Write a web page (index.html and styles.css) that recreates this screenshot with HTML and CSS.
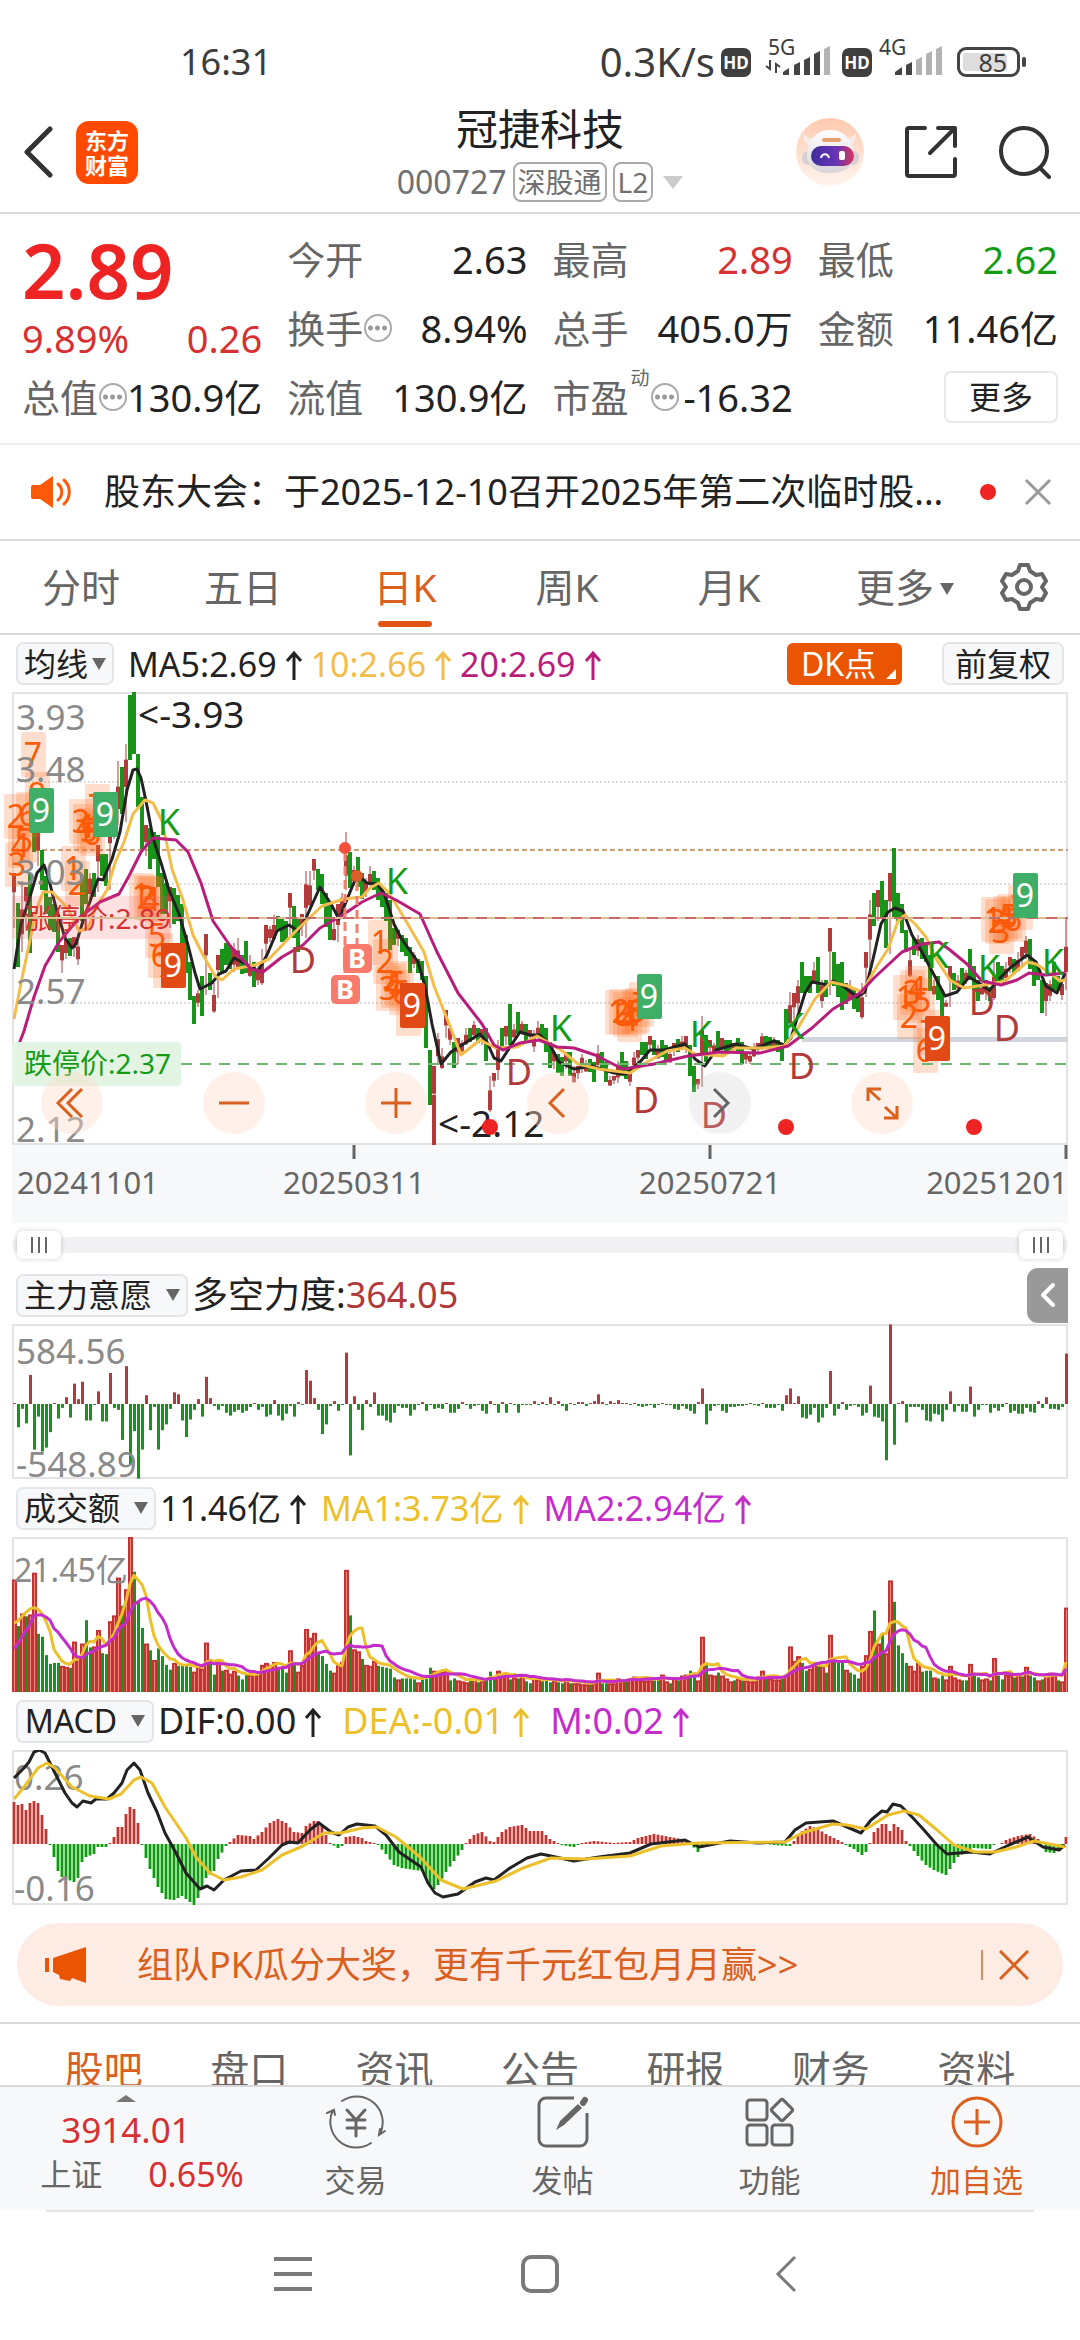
FILE: index.html
```
<!DOCTYPE html>
<html lang="zh-CN">
<head>
    <meta charset="UTF-8">
    <meta name="viewport" content="width=device-width, initial-scale=1.0">
    <title>冠捷科技 000727</title>
    <link rel="stylesheet" href="styles.css">
</head>
<body>
    <div class="statusbar">
        <span class="clock">16:31</span>
        <div class="status-right">
            <span class="speed">0.3K/s</span>
            <span class="hd">HD</span>
            <svg class="signal" width="68" height="38" viewBox="0 0 68 38">
                <text x="1" y="16" class="net">5G</text>
                <path d="M3 21v9l-4-3M9 34v-9l4 3" fill="none" stroke="#444" stroke-width="2"/>
                <path d="M16 36v-3l6-4v7zM27 36v-10l6-3v13zM37 36v-15l6-3v18zM47 36v-21l6-3v24z" fill="#444"/>
                <path d="M57 36V10l6-3v29z" fill="#b3b3b3"/>
            </svg>
            <span class="hd">HD</span>
            <svg class="signal" width="68" height="38" viewBox="0 0 68 38">
                <text x="1" y="16" class="net">4G</text>
                <path d="M17 36v-3l7-5v8zM28 36v-10l6-3v13z" fill="#444"/>
                <path d="M38 36v-15l6-3v18zM48 36v-21l6-3v24zM58 36V10l6-3v29z" fill="#b3b3b3"/>
            </svg>
            <span class="battery"><span>85</span></span>
        </div>
    </div>

    <header class="topbar">
        <div class="top-side">
            <button class="icon-btn" aria-label="返回">
                <svg width="32" height="52" viewBox="0 0 32 52"><path d="M28 3L5 26l23 23" fill="none" stroke="#333" stroke-width="5" stroke-linecap="round" stroke-linejoin="round"/></svg>
            </button>
            <a href="#" class="logo">东方<br>财富</a>
        </div>
        <div class="top-title">
            <h1>冠捷科技</h1>
            <p>000727 <span class="tag">深股通</span> <span class="tag">L2</span><i class="down-big"></i></p>
        </div>
        <div class="top-side top-right">
            <button class="icon-btn" aria-label="助手">
                <svg width="68" height="68" viewBox="0 0 68 68">
                    <defs>
                        <linearGradient id="halo" x1="0" y1="0" x2="0" y2="1"><stop offset="0" stop-color="#ffc9ae"/><stop offset="1" stop-color="#fff5f0"/></linearGradient>
                        <linearGradient id="visor" x1="0" y1="0" x2="1" y2="0"><stop offset="0" stop-color="#3d2e9c"/><stop offset=".6" stop-color="#6a35b5"/><stop offset="1" stop-color="#d9365c"/></linearGradient>
                        <linearGradient id="shell" x1="0" y1="0" x2="0" y2="1"><stop offset="0" stop-color="#ffffff"/><stop offset="1" stop-color="#d9d4d8"/></linearGradient>
                    </defs>
                    <circle cx="34" cy="34" r="34" fill="url(#halo)"/>
                    <path d="M7 15c0 7 2 11 8 13l8-7c-6 1-12-1-16-6zM60 15c0 7-2 11-8 13l-8-7c6 1 12-1 16-6z" fill="#f3ece9"/>
                    <rect x="6" y="33" width="12" height="14" rx="6" fill="#d6d0d3"/>
                    <rect x="51" y="33" width="12" height="14" rx="6" fill="#d6d0d3"/>
                    <path d="M34 12c14 0 24 11 24 25 0 12-10 18-24 18S11 49 11 37c0-14 9-25 23-25z" fill="url(#shell)"/>
                    <rect x="15" y="28" width="43" height="20" rx="10" fill="url(#visor)"/>
                    <path d="M25 40c1-5 7-5 8 0" fill="none" stroke="#fff" stroke-width="2"/>
                    <rect x="43" y="33" width="6" height="9" rx="2" fill="#fff"/>
                    <rect x="26" y="20" width="19" height="4" rx="2" fill="#e5a070"/>
                </svg>
            </button>
            <button class="icon-btn" aria-label="分享">
                <svg width="54" height="54" viewBox="0 0 54 54" fill="none" stroke="#333" stroke-width="4" stroke-linecap="round" stroke-linejoin="round">
                    <path d="M21 3H5a2 2 0 0 0-2 2v44a2 2 0 0 0 2 2h44a2 2 0 0 0 2-2V34M34 3h17v18M50 4L26 28"/>
                </svg>
            </button>
            <button class="icon-btn" aria-label="搜索">
                <svg width="54" height="54" viewBox="0 0 54 54" fill="none" stroke="#333" stroke-width="4" stroke-linecap="round">
                    <circle cx="26" cy="26" r="23"/><path d="M42 43l9 9"/>
                </svg>
            </button>
        </div>
    </header>

    <section class="quote">
        <div class="price">
            <strong>2.89</strong>
            <div class="pair red"><span>9.89%</span><span>0.26</span></div>
        </div>
        <div class="pair"><label>今开</label><span>2.63</span></div>
        <div class="pair"><label>最高</label><span class="red">2.89</span></div>
        <div class="pair"><label>最低</label><span class="green">2.62</span></div>
        <div class="pair"><label>换手<i class="dots"></i></label><span>8.94%</span></div>
        <div class="pair"><label>总手</label><span>405.0万</span></div>
        <div class="pair"><label>金额</label><span>11.46亿</span></div>
        <div class="pair"><label>总值<i class="dots"></i></label><span>130.9亿</span></div>
        <div class="pair"><label>流值</label><span>130.9亿</span></div>
        <div class="pair"><label>市盈<sup>动</sup><i class="dots"></i></label><span>-16.32</span></div>
        <div class="more-cell"><button class="more-btn">更多</button></div>
    </section>

    <section class="notice">
        <svg width="42" height="34" viewBox="0 0 42 34">
            <path d="M2 10h7L22 1v32L9 24H2a2 2 0 0 1-2-2V12a2 2 0 0 1 2-2z" fill="#fb5a08"/>
            <path d="M27 9c5 4 5 12 0 16M33 5c7 6 7 18 0 24" fill="none" stroke="#fb5a08" stroke-width="3" stroke-linecap="round"/>
        </svg>
        <a href="#">股东大会：于2025-12-10召开2025年第二次临时股...</a>
        <i class="red-dot"></i>
        <button class="icon-btn" aria-label="关闭">
            <svg width="28" height="28" viewBox="0 0 28 28"><path d="M2 2l24 24M26 2L2 26" stroke="#999" stroke-width="3"/></svg>
        </button>
    </section>

    <nav class="period">
        <a href="#">分时</a>
        <a href="#">五日</a>
        <a href="#" class="on">日K</a>
        <a href="#">周K</a>
        <a href="#">月K</a>
        <a href="#" class="more">更多<i class="down"></i></a>
        <button class="icon-btn" aria-label="设置">
            <svg width="48" height="50" viewBox="0 0 48 50" fill="none" stroke="#666" stroke-width="4" stroke-linejoin="round">
                <path d="M20 3h8l2 6 6 4 6-1 4 7-4 6 4 6-4 7-6-1-6 4-2 6h-8l-2-6-6-4-6 1-4-7 4-6-4-6 4-7 6 1 6-4z"/>
                <circle cx="24" cy="25" r="7"/>
            </svg>
        </button>
    </nav>

    <main>
        <div class="chart-head first">
            <button class="pick small">均线<i class="down"></i></button>
            <div class="ma-values">
                <span>MA5:2.69<svg class="up" viewBox="0 0 18 30"><path d="M9 29V3M2 10l7-8 7 8"/></svg></span>
                <span class="c-yellow">10:2.66<svg class="up" viewBox="0 0 18 30"><path d="M9 29V3M2 10l7-8 7 8"/></svg></span>
                <span class="c-magenta">20:2.69<svg class="up" viewBox="0 0 18 30"><path d="M9 29V3M2 10l7-8 7 8"/></svg></span>
            </div>
            <button class="dk">DK点</button>
            <button class="pick adjust">前复权</button>
        </div>

        <div class="kline">
            <svg id="kline" viewBox="0 0 1056 453"></svg>
            <div class="tools">
                <button aria-label="最左"><svg viewBox="0 0 62 62"><path d="M31 17L17 31l14 14M41 17L27 31l14 14"/></svg></button>
                <button aria-label="缩小"><svg viewBox="0 0 62 62"><path d="M16 31h30"/></svg></button>
                <button aria-label="放大"><svg viewBox="0 0 62 62"><path d="M16 31h30M31 16v30"/></svg></button>
                <button aria-label="左移"><svg viewBox="0 0 62 62"><path d="M37 17L23 31l14 14"/></svg></button>
                <button aria-label="右移" class="off"><svg viewBox="0 0 62 62"><path d="M25 17l14 14-14 14"/></svg></button>
                <button aria-label="全屏"><svg viewBox="0 0 62 62"><path d="M17 29V17h13M18 18l11 10M46 34v12H33M34 35l11 10"/></svg></button>
            </div>
        </div>
        <div class="dates"><span>20241101</span><span>20250311</span><span>20250721</span><span>20251201</span></div>

        <div class="range">
            <input type="range" min="0" max="100" value="0" aria-label="起始日期">
            <input type="range" min="0" max="100" value="100" aria-label="结束日期">
        </div>

        <div class="chart-head">
            <button class="pick">主力意愿<i class="down"></i></button>
            <div class="values large"><span>多空力度:<b class="dark-red">364.05</b></span></div>
            <button class="fold" aria-label="展开"><svg width="16" height="26" viewBox="0 0 16 26"><path d="M13 3L3 13l10 10" fill="none" stroke="#fff" stroke-width="4" stroke-linecap="round" stroke-linejoin="round"/></svg></button>
        </div>
        <svg class="sub" id="force" viewBox="0 0 1056 155"></svg>

        <div class="chart-head">
            <button class="pick">成交额<i class="down"></i></button>
            <div class="values">
                <span>11.46亿<svg class="up" viewBox="0 0 18 30"><path d="M9 29V3M2 10l7-8 7 8"/></svg></span>
                <span class="c-gold">MA1:3.73亿<svg class="up" viewBox="0 0 18 30"><path d="M9 29V3M2 10l7-8 7 8"/></svg></span>
                <span class="c-purple">MA2:2.94亿<svg class="up" viewBox="0 0 18 30"><path d="M9 29V3M2 10l7-8 7 8"/></svg></span>
            </div>
        </div>
        <svg class="sub" id="volume" viewBox="0 0 1056 155"></svg>

        <div class="chart-head">
            <button class="pick macd">MACD<i class="down"></i></button>
            <div class="values large">
                <span>DIF:0.00<svg class="up" viewBox="0 0 18 30"><path d="M9 29V3M2 10l7-8 7 8"/></svg></span>
                <span class="c-gold">DEA:-0.01<svg class="up" viewBox="0 0 18 30"><path d="M9 29V3M2 10l7-8 7 8"/></svg></span>
                <span class="c-purple">M:0.02<svg class="up" viewBox="0 0 18 30"><path d="M9 29V3M2 10l7-8 7 8"/></svg></span>
            </div>
        </div>
        <svg class="sub" id="macd" viewBox="0 0 1056 155"></svg>

        <div class="banner">
            <svg width="42" height="38" viewBox="0 0 42 38" fill="#ea5504"><path d="M0 12h4v14H0zM8 12L41 1v36l-14-5-2 3-10-2-1-4-6-3z"/></svg>
            <a href="#">组队PK瓜分大奖，更有千元红包月月赢&gt;&gt;</a>
            <button class="icon-btn" aria-label="关闭">
                <svg width="30" height="30" viewBox="0 0 30 30"><path d="M1 1l28 28M29 1L1 29" stroke="#d9601f" stroke-width="3"/></svg>
            </button>
        </div>
    </main>

    <nav class="info-tabs">
        <a href="#" class="on">股吧</a>
        <a href="#">盘口</a>
        <a href="#">资讯</a>
        <a href="#">公告</a>
        <a href="#">研报</a>
        <a href="#">财务</a>
        <a href="#">资料</a>
    </nav>

    <footer class="bottom">
        <a href="#" class="index">
            <i class="tri-up"></i>
            <span class="red">3914.01</span>
            <div><small>上证</small><span class="red">0.65%</span></div>
        </a>
        <a href="#">
            <svg width="62" height="54" viewBox="0 0 62 54" fill="none" stroke="#666" stroke-width="2" stroke-linecap="round">
                <path d="M17 6a26 26 0 0 1 38 33M46 48A26 26 0 0 1 8 15M2 18l7-3 1 5M60 36l-6 4 1-6"/>
                <path d="M22 15l9 10 9-10M22 25h18M22 33h18M31 25v16" stroke-width="3"/>
            </svg>
            交易
        </a>
        <a href="#">
            <svg width="54" height="54" viewBox="0 0 54 54" fill="none" stroke="#666">
                <path d="M38 3H10a7 7 0 0 0-7 7v34a7 7 0 0 0 7 7h34a7 7 0 0 0 7-7V18" stroke-width="3"/>
                <path d="M20 35l4-9L42 9l4 4-18 17z" fill="#666" stroke="none"/><path d="M47 8l2-3" stroke-width="6" stroke-linecap="round"/>
            </svg>
            发帖
        </a>
        <a href="#">
            <svg width="54" height="54" viewBox="0 0 54 54" fill="none" stroke="#666" stroke-width="3">
                <rect x="4" y="5" width="20" height="20" rx="3"/><rect x="4" y="30" width="20" height="20" rx="3"/><rect x="29" y="30" width="20" height="20" rx="3"/>
                <rect x="31" y="7" width="16" height="16" rx="2" transform="rotate(45 39 15)"/>
            </svg>
            功能
        </a>
        <a href="#" class="add">
            <svg width="54" height="54" viewBox="0 0 54 54" fill="none" stroke="#d9601f" stroke-width="3"><circle cx="27" cy="27" r="24"/><path d="M14 27h26M27 14v26"/></svg>
            加自选
        </a>
    </footer>

    <div class="sysnav">
        <button class="icon-btn" aria-label="菜单"><svg width="40" height="40" viewBox="0 0 40 40"><path d="M1 5h38M1 20h38M1 35h38" stroke="#7a7a7a" stroke-width="4"/></svg></button>
        <button class="icon-btn" aria-label="主页"><svg width="40" height="40" viewBox="0 0 40 40"><rect x="3" y="3" width="34" height="34" rx="8" fill="none" stroke="#7a7a7a" stroke-width="4"/></svg></button>
        <button class="icon-btn" aria-label="后退"><svg width="40" height="40" viewBox="0 0 40 40"><path d="M28 3L11 20l17 17" fill="none" stroke="#7a7a7a" stroke-width="3"/></svg></button>
    </div>

    <script src="chart.js"></script>
</body>
</html>
```
FILE: styles.css
```
/* CSS Styles */
* {
    box-sizing: border-box;
}

body {
    font-family: "Noto Sans", "Noto Sans CJK SC", sans-serif;
    margin: 0;
    padding: 0;
    background-color: #fff;
    color: #222;
    line-height: 1;
}

h1, p {
    margin: 0;
}

a {
    color: inherit;
    text-decoration: none;
}

button {
    font-family: inherit;
    color: inherit;
    border: none;
    background: none;
    padding: 0;
    line-height: 1;
    cursor: pointer;
}

svg {
    display: block;
}

.icon-btn {
    display: flex;
}

.red { color: #d63031; }
.green { color: #159c15; }
.dark-red { color: #b03a3a; font-weight: 400; }
.c-yellow { color: #f3bd4c; }
.c-magenta { color: #b91d7c; }
.c-gold { color: #ecc02a; }
.c-purple { color: #c42ccb; }

/* Status bar */
.statusbar {
    display: flex;
    justify-content: space-between;
    align-items: center;
    height: 84px;
    padding: 40px 60px 0 180px;
    color: #3c3c3c;
    font-size: 36px;
}

.status-right {
    display: flex;
    align-items: center;
}

.speed {
    font-size: 40px;
}

.hd {
    width: 30px;
    height: 29px;
    margin-left: 6px;
    border-radius: 7px;
    background-color: #3f3f3f;
    color: #fff;
    font-size: 17px;
    font-weight: 700;
    line-height: 29px;
    text-align: center;
}

.signal {
    margin-left: 16px;
    margin-right: 1px;
    margin-bottom: 8px;
    overflow: visible;
}

.hd + .signal ~ .hd + .signal {
    margin-left: 6px;
}

.net {
    font-size: 21px;
    fill: #3c3c3c;
}

.battery {
    position: relative;
    width: 63px;
    height: 30px;
    margin-left: 10px;
    padding: 3px;
    border: 3px solid #444;
    border-radius: 9px;
}

.battery span {
    display: block;
    width: 44px;
    height: 18px;
    border-radius: 3px;
    background-color: #ddd;
    font-size: 25px;
    line-height: 18px;
    text-align: right;
}

.battery::after {
    content: "";
    position: absolute;
    right: -9px;
    top: 7px;
    width: 4px;
    height: 10px;
    border-radius: 2px;
    background-color: #444;
}

/* Header */
.topbar {
    display: flex;
    align-items: center;
    height: 130px;
    padding: 8px 28px 0 22px;
    border-bottom: 2px solid #d9d9d9;
}

.top-side {
    display: flex;
    align-items: center;
    flex: 1;
    gap: 22px;
}

.top-right {
    justify-content: flex-end;
    gap: 40px;
}

.logo {
    width: 62px;
    height: 63px;
    padding-top: 7px;
    border-radius: 13px;
    background-color: #ff4a00;
    color: #fff;
    font-size: 22px;
    font-weight: 700;
    line-height: 25px;
    text-align: center;
}

.top-title {
    padding-top: 8px;
    text-align: center;
}

.top-title h1 {
    padding-left: 6px;
    font-size: 42px;
    font-weight: 400;
    line-height: 52px;
}

.top-title p {
    display: flex;
    align-items: center;
    gap: 6px;
    padding-left: 6px;
    color: #707070;
    font-size: 32px;
    line-height: 54px;
}

.tag {
    height: 40px;
    padding: 0 3px;
    border: 2px solid #aaa;
    border-radius: 8px;
    font-size: 28px;
    line-height: 36px;
}

.down,
.down-big {
    display: inline-block;
    border-left: 7px solid transparent;
    border-right: 7px solid transparent;
    border-top: 12px solid #666;
}

.down-big {
    margin-left: 4px;
    border-left-width: 10px;
    border-right-width: 10px;
    border-top: 13px solid #ccc;
}

/* Quote panel */
.quote {
    display: grid;
    grid-template-columns: repeat(4, 1fr);
    grid-auto-rows: 69px;
    column-gap: 25px;
    padding: 10px 22px 12px;
    border-bottom: 2px solid #eee;
}

.price {
    grid-row: span 2;
    padding-top: 8px;
}

.price strong {
    display: block;
    color: #ee2424;
    font-size: 76px;
    font-weight: 600;
    line-height: 76px;
}

.price .pair {
    height: 60px;
}

.pair {
    display: flex;
    justify-content: space-between;
    align-items: center;
    font-size: 38px;
    white-space: nowrap;
}

.pair label {
    display: flex;
    align-items: center;
    color: #666;
}

.pair sup {
    align-self: flex-start;
    margin: -10px 0 0 2px;
    font-size: 19px;
    line-height: 20px;
}

.dots {
    width: 28px;
    height: 28px;
    margin-left: 1px;
    border: 2px solid #aaa;
    border-radius: 50%;
    background: radial-gradient(circle, #999 2px, transparent 3px) 0 0 / 7px 24px;
    background-origin: content-box;
    background-clip: content-box;
    padding: 0 1px;
}

.more-cell {
    display: flex;
    justify-content: flex-end;
    align-items: center;
}

.more-btn {
    width: 114px;
    height: 52px;
    border: 2px solid #e6e8ea;
    border-radius: 7px;
    font-size: 32px;
}

/* Notice */
.notice {
    display: flex;
    align-items: center;
    height: 96px;
    padding: 0 28px 0 31px;
    border-bottom: 2px solid #d9d9d9;
    font-size: 36px;
}

.notice a {
    flex: 1;
    margin-left: 31px;
    white-space: nowrap;
}

.red-dot {
    width: 16px;
    height: 16px;
    margin-right: 28px;
    border-radius: 50%;
    background-color: #ee2424;
}

/* Period tabs */
.period {
    display: flex;
    align-items: center;
    height: 94px;
    border-bottom: 2px solid #d9d9d9;
    color: #666;
    font-size: 39px;
}

.period a {
    flex: 0 0 15%;
    position: relative;
    line-height: 92px;
    text-align: center;
    white-space: nowrap;
}

.period .more {
    flex: 1;
}

.period button {
    margin-right: 32px;
}

.period .down {
    margin-left: 6px;
    vertical-align: 7px;
}

.on {
    color: #d9601f;
}

.period .on::after {
    content: "";
    position: absolute;
    left: 50%;
    bottom: 6px;
    width: 54px;
    height: 6px;
    margin-left: -27px;
    border-radius: 3px;
    background-color: #e0550f;
}

/* Chart area */
main {
    padding: 0 12px;
}

.chart-head {
    display: flex;
    align-items: center;
    height: 58px;
    padding: 0 4px;
    font-size: 34px;
    white-space: nowrap;
}

.chart-head.first {
    height: 57px;
}

.pick {
    display: flex;
    align-items: center;
    justify-content: center;
    gap: 14px;
    height: 43px;
    padding: 0 6px;
    border: 2px solid #e3e5e8;
    border-radius: 7px;
    background-color: #f7f8fa;
    font-size: 32px;
}

.pick.small {
    gap: 4px;
}

.pick.macd {
    width: 138px;
}

.pick.adjust {
    width: 122px;
}

.values,
.ma-values {
    display: flex;
    flex: 1;
    gap: 14px;
    margin-left: 4px;
}

.values.large {
    gap: 20px;
    font-size: 36px;
}

.ma-values {
    gap: 8px;
    margin-left: 14px;
}

.up {
    display: inline-block;
    width: 18px;
    height: 30px;
    margin-left: 8px;
    fill: none;
    stroke: currentColor;
    stroke-width: 3px;
    vertical-align: -4px;
}

.dk {
    position: relative;
    width: 115px;
    height: 42px;
    margin-right: 40px;
    padding-right: 12px;
    border-radius: 6px;
    background-color: #ea5504;
    color: #fff;
    font-size: 32px;
}

.dk::after {
    content: "";
    position: absolute;
    right: 6px;
    bottom: 6px;
    border-left: 10px solid transparent;
    border-bottom: 10px solid #fff;
}

.fold {
    display: flex;
    align-items: center;
    justify-content: center;
    width: 41px;
    height: 55px;
    margin-right: -4px;
    border-radius: 11px 0 0 11px;
    background-color: #999;
}

.kline {
    position: relative;
}

.kline > svg,
.sub {
    width: 100%;
    height: auto;
}

.kline > svg {
    position: relative;
    overflow: visible;
}

.tools {
    position: absolute;
    left: 29px;
    bottom: 11px;
    display: flex;
    gap: 100px;
}

.tools button {
    width: 62px;
    height: 62px;
    border-radius: 50%;
    background-color: rgba(255, 220, 200, 0.4);
}

.tools path {
    fill: none;
    stroke: #d9601f;
    stroke-width: 3px;
}

.tools .off {
    background-color: rgba(200, 200, 200, 0.25);
}

.tools .off path {
    stroke: #666;
}

.dates {
    display: grid;
    grid-template-columns: 164fr 356fr 356fr 180fr;
    height: 78px;
    background-color: #f7f8fa;
    color: #666;
    font-size: 31px;
    line-height: 74px;
    text-align: center;
}

.dates span:first-child {
    padding-left: 5px;
    text-align: left;
}

.dates span:last-child {
    text-align: right;
}

/* Date range */
.range {
    position: relative;
    height: 43px;
}

.range::before {
    content: "";
    position: absolute;
    left: 0;
    right: 0;
    top: 14px;
    height: 16px;
    border-radius: 8px;
    background-color: #f1f1f4;
}

.range input {
    position: absolute;
    left: 5px;
    top: 8px;
    width: calc(100% - 10px);
    height: 28px;
    margin: 0;
    appearance: none;
    background: none;
    pointer-events: none;
}

.range input::-webkit-slider-thumb {
    appearance: none;
    width: 44px;
    height: 28px;
    border-radius: 6px;
    background: repeating-linear-gradient(90deg, #666 0 2px, transparent 2px 7px) center / 16px 16px no-repeat #fff;
    box-shadow: 0 0 5px rgba(0, 0, 0, 0.2);
    pointer-events: auto;
}

/* Text inside the charts */
.axis {
    font-size: 35px;
    fill: #8a8a8a;
}

.axis.dark {
    font-size: 37px;
    fill: #222;
}

.axis.cjk {
    font-size: 32px;
}

.limit {
    font-size: 28px;
}

.mark {
    font-size: 36px;
    text-anchor: middle;
}

.count {
    font-size: 32px;
    fill: #fb5a08;
    text-anchor: middle;
}

.nine {
    font-size: 32px;
    fill: #fff;
    text-anchor: middle;
}

.buy {
    font-size: 27px;
    font-weight: 700;
    fill: #fff;
    text-anchor: middle;
}

.line {
    fill: none;
    stroke-width: 3px;
    stroke-linejoin: round;
}

/* Banner */
.banner {
    display: flex;
    align-items: center;
    height: 83px;
    margin: 18px 5px 16px;
    padding: 0 34px 0 28px;
    border-radius: 42px;
    background-color: #fdece3;
    color: #d9601f;
    font-size: 36px;
}

.banner a {
    flex: 1;
    margin-left: 50px;
    white-space: nowrap;
}

.banner button {
    padding-left: 16px;
    border-left: 2px solid #e08a5b;
}

/* Info tabs */
.info-tabs {
    display: flex;
    height: 63px;
    padding: 0 31px;
    border-top: 2px solid #d9d9d9;
    overflow: hidden;
    color: #666;
    font-size: 39px;
    line-height: 90px;
}

.info-tabs a {
    flex: 1;
    text-align: center;
}

/* Bottom bar */
.bottom {
    display: flex;
    height: 125px;
    border-top: 2px solid #d9d9d9;
    background-color: #f7f8fa;
    color: #666;
    font-size: 31px;
}

.bottom a {
    display: flex;
    flex: 1;
    flex-direction: column;
    align-items: center;
    padding-top: 8px;
    gap: 16px;
}

.bottom .index {
    flex: 0 0 252px;
    gap: 10px;
    font-size: 35px;
}

.bottom .index div {
    display: flex;
    align-items: center;
    gap: 46px;
    padding-left: 32px;
    font-size: 34px;
}

.bottom small {
    font-size: 31px;
}

.bottom .add {
    color: #d9601f;
}

.tri-up {
    border-left: 10px solid transparent;
    border-right: 10px solid transparent;
    border-bottom: 7px solid #777;
}

/* System navigation */
.sysnav {
    display: flex;
    justify-content: center;
    gap: 207px;
    margin: 0 46px;
    padding: 42px 0;
    border-top: 2px solid #e6e6e6;
}
```
FILE: chart.js
```
// one bar every 4 units, first bar centred on x = 2
const STEP = 4;
const RED = "#b23a3a";
const GREEN = "#1a931a";

const barX = i => 2 + i * STEP;
const rect = (x, y, w, h, fill, extra = "") =>
    `<rect x="${x}" y="${y}" width="${w}" height="${h}" fill="${fill}" ${extra}/>`;
const text = (x, y, cls, str, fill) =>
    `<text x="${x}" y="${y}" class="${cls}"${fill ? ` fill="${fill}"` : ""}>${str}</text>`;
const line = (pts, color) => `<polyline class="line" stroke="${color}" points="${pts}"/>`;
const frame = h => `<rect x="1" y="1" width="1054" height="${h - 2}" fill="none" stroke="#e3e3e3" stroke-width="2"/>`;
const dash = (y, color, pattern, from = 0) =>
    `<path d="M${from} ${y}H1056" stroke="${color}" stroke-width="2" stroke-dasharray="${pattern}"/>`;

// candles: top,length (negative length = falling day)
const candles = `181,55 211,-64 189,71 195,41 181,-80 139,-21 140,34 158,-40 184,-38 205,-33 212,-28 229,-31
253,28 243,24 246,-18 245,20 250,23 184,-45 177,-35 181,28 181,-24 153,47 162,-22 162,-32 126,72 112,35 69,64 75,-47
52,78 3,-65 0,-62 62,-53 105,-52 133,31 136,-41 140,-27 143,-52 181,-41 191,-31 195,41 196,-36 203,-26 212,-48 243,-38
270,-38 304,-28 298,17 284,-40 242,61 281,-17 291,30 263,43 257,-24 251,-22 253,-24 251,29 246,31 263,-19 249,-32 263,22
270,-25 274,19 257,36 233,34 234,16 223,25 224,-15 226,-24 229,-20 201,42 214,-32 226,-34 222,22 179,67 179,36 167,21
177,-21 182,-30 201,-34 212,-36 229,20 212,38 201,25 140,58 160,-36 174,20 165,-30 181,-26 186,19 174,20 179,-19 186,-22
195,-20 201,-28 208,-50 236,-17 238,16 243,-17 246,-18 255,-26 260,16 267,-14 269,-19 284,-72 358,-55 374,79 341,31 356,21
318,28 332,21 350,-26 346,26 348,15 336,17 336,-14 329,19 336,-15 337,16 336,-33 384,36 381,14 348,40 336,-21 334,19
312,-41 332,14 320,-22 329,14 332,-17 338,12 338,22 329,17 332,-17 336,-24 350,-26 360,17 362,-19 365,-19 360,17 360,-24
374,17 374,13 362,19 368,12 367,-13 370,-20 353,21 360,-17 370,-20 384,10 384,8 369,22 360,-24 369,-18 377,17 360,14
358,14 350,-13 350,-17 344,16 348,-15 353,14 348,-17 353,-17 356,15 351,13 347,-13 344,14 344,17 353,-31 374,-26 387,10
324,71 343,-27 348,14 351,12 339,-21 346,17 348,-12 348,-12 351,10 346,-14 350,-22 362,10 362,10 351,14 351,12 341,17
344,-13 345,-12 345,13 348,-12 353,-16 317,-35 300,33 301,26 288,31 270,-31 284,-16 284,-17 270,21 265,-36 288,28 288,-17
236,67 260,-34 272,-33 270,-48 291,-21 288,21 298,-19 301,-19 291,36 260,45 208,72 201,-33 198,31 189,-36 208,-48 181,81
156,-70 201,-28 212,-29 238,-22 257,28 246,-17 243,21 246,-21 253,-17 263,-36 288,15 284,-24 298,-29 308,7 274,41 281,-17
283,14 276,-19 278,14 257,-31 274,-24 288,-21 291,12 288,20 295,-14 269,39 270,-21 274,-17 270,17 265,16 267,-15 260,20
255,19 244,23 247,-30 270,-24 274,-14 288,-33 291,33 288,21 270,-28 284,-15 288,20 226,72`
    .split(/\s+/).map(c => c.split(",").map(Number));

const ma5 = "2,277 9,232 17,208 25,181 32,173 36,184 43,212 53,246 60,256 64,252 71,229 81,201 86,187 91,188 100,167 108,140 115,98 121,78 125,77 129,86 134,109 141,146 150,174 157,198 167,222 176,253 183,281 188,297 200,291 207,282 214,279 222,266 234,272 246,279 255,263 265,239 277,233 286,239 294,226 308,195 319,212 327,227 336,205 343,188 348,185 355,191 365,192 372,201 382,232 389,246 406,270 413,294 420,332 429,372 439,360 453,351 468,342 475,350 482,366 489,369 498,355 508,340 518,343 528,343 538,353 547,370 562,377 580,374 602,381 614,382 628,370 638,358 652,358 673,352 683,367 693,374 704,358 724,352 741,357 762,349 772,353 779,346 793,301 800,290 816,293 821,289 831,294 845,305 853,300 862,263 869,232 876,220 883,216 891,219 900,243 910,260 921,281 933,304 945,300 957,285 967,291 977,299 986,288 998,276 1015,263 1024,270 1034,294 1045,301 1053,281";
const ma10 = "2,327 9,291 17,253 24,219 31,200 40,200 50,210 57,219 67,239 76,236 84,215 95,198 103,171 112,150 121,122 133,108 141,111 150,129 160,177 171,208 181,243 191,263 203,284 210,288 222,277 243,273 257,267 277,246 294,229 310,214 332,207 350,205 358,196 367,191 377,201 394,229 412,260 422,294 436,329 449,363 468,348 484,356 505,355 525,344 549,358 566,372 587,377 618,381 635,370 655,359 673,356 683,362 711,364 724,356 752,356 772,354 786,336 803,307 819,290 836,294 850,300 865,274 876,257 886,229 893,223 903,232 914,245 924,267 938,288 952,296 972,293 993,289 1015,270 1024,272 1038,281 1048,289 1053,288";
const ma20 = "2,365 12,339 22,305 33,274 47,250 67,226 88,210 107,202 117,184 129,160 141,146 164,148 176,160 189,191 201,229 219,255 239,277 251,280 270,265 291,253 308,236 329,224 350,210 369,201 384,208 408,222 425,260 446,301 470,332 482,353 491,358 508,351 527,348 545,355 562,356 583,363 611,377 642,372 676,364 707,360 748,361 776,354 800,336 821,317 848,301 862,286 890,260 910,252 927,250 938,258 955,272 970,289 989,293 1005,288 1017,281 1034,283 1053,281";

// nine-turn counters: x, y, digit
const counts = [
    [21, 62, 7], [25, 102, 8], [4, 124, 2], [16, 122, 6], [12, 148, 5], [8, 153, 4], [5, 172, 3],
    [61, 176, 1], [65, 191, 2], [69, 129, 3], [73, 134, 4], [77, 138, 5], [80, 141, 6], [85, 114, 7],
    [129, 203, 1], [134, 205, 2], [137, 206, 3], [139, 207, 4], [145, 243, 5], [148, 263, 6], [153, 273, 7],
    [368, 250, 1], [373, 269, 2], [376, 296, 3], [381, 293, 4], [385, 291, 5], [389, 300, 6], [396, 321, 7],
    [605, 320, 1], [609, 319, 2], [613, 322, 3], [617, 327, 4], [622, 320, 5], [625, 318, 6], [629, 312, 7],
    [893, 305, 1], [897, 324, 2], [900, 300, 3], [905, 296, 4], [910, 308, 5], [913, 358, 6], [917, 340, 7],
    [981, 227, 1], [985, 229, 2], [989, 239, 3], [993, 226, 4], [997, 224, 5], [1001, 227, 6], [1008, 215, 7]
];
const nines = [[29, 118, 0], [93, 122, 0], [161, 273, 1], [400, 313, 1], [637, 304, 0], [925, 346, 1], [1013, 203, 0]];
const kMarks = [[157, 130], [385, 189], [549, 336], [689, 342], [781, 334], [926, 263], [977, 276], [1041, 270]];
const dMarks = [[291, 268], [507, 380], [634, 408], [702, 423], [790, 374], [970, 310], [995, 336]];

function drawKline() {
    let s = frame(453);
    s += dash(90, "#ddd", "2 2") + dash(192, "#ddd", "2 2") + dash(311, "#ddd", "2 2");
    s += rect(790, 345, 266, 5, "#d0d5dc");
    s += dash(158, "#cf9d76", "5 3", 30);
    candles.forEach(([top, len], i) => {
        const x = barX(i);
        if (len < 0) {
            s += rect(x - 2, top, 4, -len, GREEN);
        } else {
            s += rect(x - 0.5, top, 1, len, RED);
            s += rect(x - 2, top + len * (i % 3) * 0.2, 4, len * (len > 40 ? 0.35 : 0.55), RED);
        }
    });
    // rebound from the 2.12 low
    s += rect(barX(105) - 2, 403, 4, 50, RED);
    s += line(ma5, "#222") + line(ma10, "#f3bd4c") + line(ma20, "#b91d7c");

    counts.forEach(([x, y]) => s += rect(x - 12, y - 22, 25, 45, "#ff6a1a", 'rx="2" opacity=".22"'));
    counts.forEach(([x, y, n]) => s += text(x, y + 12, "count", n));
    s += text(4, 38, "axis", "3.93") + text(4, 90, "axis", "3.48") + text(4, 193, "axis", "3.03");
    s += text(4, 312, "axis", "2.57") + text(4, 450, "axis", "2.12");

    // price limit lines
    s += rect(0, 204, 160, 43, "#ff5a5a", 'opacity=".18"') + text(12, 237, "limit", "涨停价:2.89", "#d63031");
    s += dash(226, "#d8bf96", "none") + dash(226, "#c96a6a", "11 8", 160);
    s += dash(372, "#6fb46f", "11 8", 169);
    s += rect(0, 350, 169, 44, "#e3f4e3", 'rx="4"') + text(12, 382, "limit", "跌停价:2.37", "#159c15");

    nines.forEach(([x, y, low]) => {
        s += rect(x - 12, y - 22, 25, 45, low ? "#e24a15" : "#3fae66", 'rx="2"') + text(x, y + 12, "nine", 9);
    });
    kMarks.forEach(([x, y]) => s += text(x, y + 13, "mark", "K", "#159c15"));
    dMarks.forEach(([x, y]) => s += text(x, y + 13, "mark", "D", "#b23a3a"));

    s += '<path d="M333 160V290M345 190V260" stroke="#f08070" stroke-width="3" stroke-dasharray="9 5"/>';
    s += '<circle cx="333" cy="156" r="6" fill="#f4503c"/><circle cx="345" cy="184" r="6" fill="#d9602c"/>';
    [[345, 266], [333, 297]].forEach(([x, y]) => {
        s += rect(x - 14, y - 14, 29, 29, "#f87a6c", 'rx="5"') + text(x, y + 10, "buy", "B");
    });
    s += text(126, 36, "axis dark", "&lt;-3.93") + text(426, 445, "axis dark", "&lt;-2.12");
    [478, 774, 962].forEach(x => s += `<circle cx="${x}" cy="435" r="8" fill="#ee2424"/>`);
    s += '<path d="M342 453v14M698 453v14M1054 453v14" stroke="#666" stroke-width="3"/>';
    document.getElementById("kline").innerHTML = s;
}

const force = [1, -24, -5, -20, 30, -47, -13, -49, -45, -29, 1, -15, -4, 7, -14, 21, 5, 23, -17, -17, -1, 13, -18, -18,
    32, -4, -6, -37, 39, -62, -28, -77, -47, 9, -27, -3, -47, -27, -21, -5, 12, 10, -17, -34, -16, -6, 5, -13, 28, 6,
    -2, -6, -2, -9, -12, -8, -6, -9, -7, -3, 1, -6, -3, -13, -11, 4, -12, -17, -10, -2, -13, 2, -1, 35, 24, 6, -6, -31,
    -21, -2, 3, -7, -1, 53, -53, 8, -6, -27, 4, -3, 12, -12, -12, -17, -19, -9, -2, -4, -4, -12, -6, -1, 2, -7, -1, -5,
    -4, -5, 1, -9, -9, -5, 2, -1, -5, -2, -1, -7, -10, 3, -1, -9, 2, -9, 1, -1, -9, -1, -1, -1, 3, -1, 2, -1, 7, -1, 3,
    -2, -7, 1, -1, 2, 2, -2, 1, 3, 10, 2, -1, 3, 1, 4, 1, 1, -1, 1, -2, -3, -2, -1, -4, -1, 1, -1, -1, -5, -6, -2, -5,
    -7, -10, 2, 16, -21, -7, -2, -1, -7, -9, -3, -3, -2, -2, -1, 1, -1, -2, 1, -4, -4, -4, -1, -7, 9, 16, 1, 8, -14,
    -15, -11, -4, -19, -14, -4, 34, -12, -5, 2, -6, -2, -1, -3, -12, -9, 19, -13, -14, -18, -58, 82, -42, 1, 3, -19, -3,
    -3, -3, -6, -17, -18, -10, -11, -18, -6, 13, -8, -2, -8, -8, 18, -13, -6, -1, -1, -9, -4, -7, -3, 1, -9, -7, -10,
    -10, -4, -8, -9, 3, -4, 7, -5, -5, -6, -3, 52];

function drawForce() {
    let s = frame(155);
    force.forEach((v, i) => {
        const h = Math.abs(v) * 0.97;
        s += rect(barX(i) - 1, v > 0 ? 80 - h : 80, 3, h, v > 0 ? RED : GREEN);
    });
    s += text(4, 40, "axis", "584.56") + text(4, 153, "axis", "-548.89");
    document.getElementById("force").innerHTML = s;
}

const volume = [116, -68, 81, -78, 80, 123, -60, -57, -38, -29, -30, -30, 27, 26, -25, 52, 35, 50, -74, -46, 47, 64, -40,
    -39, 73, 79, 118, -89, 106, 160, -124, -93, -66, 50, -43, 33, -45, -37, -28, -23, 30, -27, -27, -27, -26, 21, 26, 24,
    51, -34, -18, 32, -22, 23, 19, 22, -17, -13, -18, 18, 18, 20, 28, 30, 28, 31, -26, -24, -20, 43, -30, 21, 28, 65, 56,
    61, -41, -37, -29, -22, 20, 28, 31, 126, -79, 44, 42, -34, 28, 27, 32, -27, -26, -25, -24, -15, 13, -14, -14, -15,
    -13, 10, -13, -17, -25, 22, 20, 21, 22, -12, -14, 12, 11, 10, -12, 13, -10, 12, -13, -21, -14, 22, 17, 18, -13, 15,
    -14, 16, -11, -9, 15, 13, -11, -12, -10, 12, -10, -9, 14, -9, 9, 9, 8, 8, -8, 9, 20, -9, -9, 9, 9, 14, 11, -11, 14,
    16, 15, 12, 12, 12, -12, -13, 18, 11, -9, 15, -12, 17, 18, -22, -20, 12, 57, -30, 18, 17, -20, 17, 14, 11, -12, 14,
    -12, 12, 11, 11, 16, 22, -14, 14, 13, 13, -16, 18, 47, 32, 37, -30, -22, 24, 31, -27, 27, -20, 59, -35, -30, -30, 23,
    -20, -18, -14, 27, 38, 63, -84, 50, -60, 40, 115, -93, -48, -40, -30, 27, 22, 30, -21, -22, -22, 15, -14, -17, 13,
    27, 15, 13, -12, -12, 29, -20, -15, 13, 14, -12, 35, -17, -13, 18, 18, -15, 18, -16, 26, -17, -15, 12, -13, 19, 20,
    19, -12, 11, 87];

function average(values, before, n) {
    const all = before.concat(values).map(Math.abs);
    return values.map((v, i) => {
        const end = i + before.length + 1;
        const sum = all.slice(end - n, end).reduce((a, b) => a + b, 0);
        return `${barX(i)},${(154 - sum / n * 0.97).toFixed(1)}`;
    }).join(" ");
}

function drawVolume() {
    let s = frame(155);
    volume.forEach((v, i) => {
        const h = Math.abs(v) * 0.97;
        if (v > 0) {
            s += rect(barX(i) - 2, 155 - h, 5, h, "#c23434") + rect(barX(i), 157 - h, 1, h - 2, "#ee8a80");
        } else {
            s += rect(barX(i) - 1, 155 - h, 3, h, GREEN);
        }
    });
    const before = [10, 12, 15, 20, 25, 55, 58, 58, 62];
    s += line(average(volume, before, 5), "#ecc02a") + line(average(volume, before, 10), "#c42ccb");
    s += text(2, 45, "axis cjk", "21.45亿");
    document.getElementById("volume").innerHTML = s;
}

// MACD histogram, interpolated between [bar, height]
const hist = [[0, 42], [1, 39], [2, 40], [3, 34], [4, 41], [5, 43], [6, 41], [7, 29], [8, 15], [9, -1], [10, -13], [11, -27],
    [12, -33], [15, -38], [16, -34], [17, -18], [18, -13], [20, -10], [21, -3], [23, -3], [24, 1], [25, 7], [26, 17],
    [27, 17], [28, 30], [29, 37], [30, 35], [31, 21], [32, -1], [33, -14], [34, -25], [36, -43], [38, -55], [40, -56],
    [42, -52], [45, -61], [46, -54], [48, -34], [50, -27], [51, -15], [53, -2], [54, 2], [56, 9], [59, 8], [60, 5],
    [62, 12], [64, 21], [66, 25], [68, 21], [70, 12], [72, 11], [73, 18], [75, 23], [76, 23], [77, 18], [78, 9], [79, 1],
    [81, -4], [82, -2], [83, 7], [85, 8], [87, 6], [88, 3], [90, 1], [91, -1], [93, -10], [95, -21], [97, -24],
    [102, -27], [104, -42], [105, -45], [106, -41], [108, -28], [110, -17], [112, -6], [113, 1], [115, 9], [117, 12],
    [119, 3], [120, 2], [122, 12], [124, 17], [127, 19], [129, 13], [132, 13], [134, 5], [136, 1], [137, -1], [140, -3],
    [142, 1], [145, 3], [150, 1], [154, 2], [156, 6], [160, 10], [164, 7], [168, 4], [169, 1], [171, -8], [172, -4],
    [174, -1], [176, 1], [185, 2], [190, -1], [194, -2], [195, 3], [196, 10], [199, 18], [201, 15], [203, 10], [207, 2],
    [208, -1], [210, -5], [212, -11], [213, -8], [214, 1], [215, 12], [217, 20], [218, 20], [219, 13], [220, 20],
    [222, 14], [223, 3], [224, -2], [226, -12], [228, -21], [230, -26], [233, -31], [234, -25], [236, -13], [238, -8],
    [240, -4], [244, -5], [245, -1], [247, 1], [248, 4], [251, 8], [254, 10], [256, 5], [257, 1], [258, -8], [260, -9],
    [262, -3], [263, 7]];
const dif = "2,28 12,18 17,12 22,2 27,0 33,3 43,23 53,43 60,53 65,57 71,51 79,53 84,49 95,49 102,43 110,33 115,20 122,13 128,20 136,43 145,62 153,83 164,103 174,123 188,139 195,136 202,140 212,130 229,121 244,120 257,108 270,95 277,92 286,93 298,80 307,73 319,82 327,85 336,77 345,74 363,76 374,85 387,102 409,117 416,133 423,143 431,147 446,144 463,132 474,128 482,130 498,118 515,108 529,104 539,106 562,111 587,107 618,103 639,94 673,90 687,97 718,91 746,93 773,92 783,80 794,73 821,71 835,77 849,83 859,70 870,61 875,62 881,54 889,56 901,68 912,80 925,95 935,104 959,102 978,104 997,95 1016,87 1031,97 1047,100 1053,95";
const dea = "2,49 12,37 26,18 35,13 43,18 60,37 78,46 97,49 109,44 122,30 129,27 140,33 153,57 174,88 184,107 198,123 212,130 229,127 250,120 270,105 291,96 312,83 329,83 350,78 365,77 384,87 408,107 429,130 451,139 484,131 511,118 539,108 573,109 618,106 649,96 687,93 773,92 790,83 821,74 835,75 854,79 876,65 892,61 907,65 925,80 942,95 963,102 983,102 1004,97 1022,91 1053,97";

function drawMacd() {
    let s = frame(155);
    for (let k = 0; k < hist.length; k++) {
        const [a, va] = hist[k];
        const [b, vb] = hist[k + 1] || [a + 1, va];
        for (let i = a; i < b; i++) {
            const v = va + (vb - va) * (i - a) / (b - a);
            const y = v > 0 ? 94 - v : 94;
            s += rect(barX(i) - 2, y, 4, Math.abs(v), v > 0 ? "#f3a5a0" : "#8be08b");
            s += rect(barX(i) - 1, y, 2, Math.abs(v), v > 0 ? RED : GREEN);
        }
    }
    s += text(2, 40, "axis", "0.26") + text(2, 151, "axis", "-0.16");
    s += line(dif, "#222") + line(dea, "#ecc02a");
    document.getElementById("macd").innerHTML = s;
}

drawKline();
drawForce();
drawVolume();
drawMacd();
```
